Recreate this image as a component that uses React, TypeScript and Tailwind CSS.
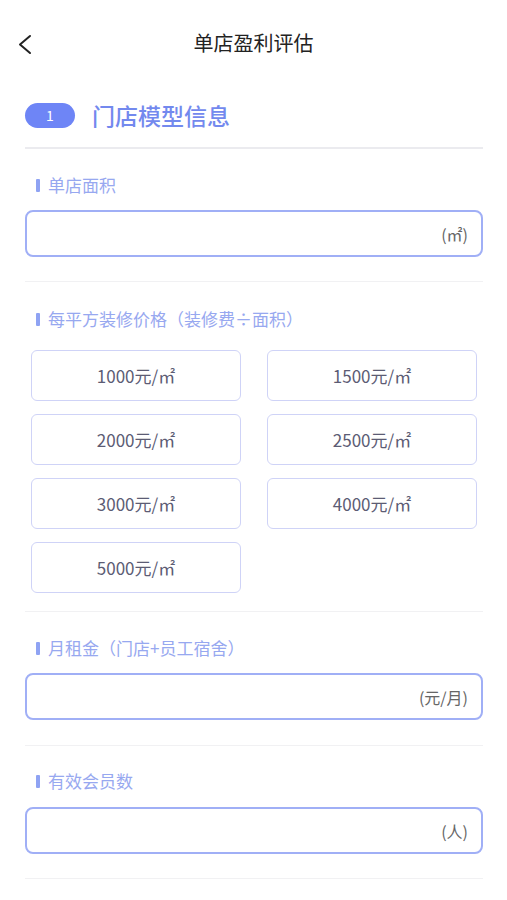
const prices = ["1000", "1500", "2000", "2500", "3000", "4000", "5000"]

function Label({ text }: { text: string }) {
  return (
    <div className="flex items-center h-[24px] pl-[11px] gap-[8px]">
      <span className="w-[4px] h-[13px] rounded-[1px] bg-[#8fa3f3]" />
      <span className="text-[17px] leading-[24px] text-[#97a8f0]">{text}</span>
    </div>
  )
}

function UnitInput({ unit }: { unit: string }) {
  return (
    <div className="h-[47px] rounded-[8px] border-[2px] border-[#a0aff6] flex items-center justify-end pr-[13px]">
      <span className="text-[16px] text-[#666]">{unit}</span>
    </div>
  )
}

function Divider() {
  return <div className="h-px bg-[#f1f1f3]" />
}

export default function App() {
  return (
    <div
      className="w-[507px] min-h-[900px] bg-white"
      style={{ fontFamily: '"Noto Sans CJK SC", "Noto Sans", sans-serif' }}
    >
      {/* header */}
      <div className="relative h-[86px] flex items-center justify-center">
        <svg
          className="absolute left-[17px] top-[34px]"
          width="16"
          height="21"
          viewBox="0 0 16 21"
          fill="none"
        >
          <polyline
            points="13,2 3,10.5 13,19"
            stroke="#222"
            strokeWidth="2"
            strokeLinecap="round"
            strokeLinejoin="round"
          />
        </svg>
        <h1 className="text-[20px] text-[#222]">单店盈利评估</h1>
      </div>

      <div className="pl-[25px] pr-[24px]">
        {/* section title */}
        <div className="mt-[16px] h-[26px] flex items-center gap-[17px]">
          <span className="w-[50px] h-[25px] rounded-full bg-[#6e85f6] text-white text-[14px] flex items-center justify-center">
            1
          </span>
          <span className="text-[23px] font-medium text-[#7389ee] leading-none">门店模型信息</span>
        </div>
        <div className="mt-[19px] h-[2px] bg-[#ebebef]" />

        <div className="mt-[24px]">
          <Label text="单店面积" />
        </div>
        <div className="mt-[13px]">
          <UnitInput unit="(㎡)" />
        </div>
        <div className="mt-[24px]">
          <Divider />
        </div>

        <div className="mt-[25px]">
          <Label text="每平方装修价格（装修费÷面积）" />
        </div>
        <div className="mt-[19px] px-[6px] grid grid-cols-2 gap-x-[26px] gap-y-[13px]">
          {prices.map((p) => (
            <div
              key={p}
              className="h-[51px] rounded-[6px] border border-[#cfd3f7] flex items-center justify-center text-[17px] text-[#5c5c74]"
            >
              {p}元/㎡
            </div>
          ))}
        </div>
        <div className="mt-[18px]">
          <Divider />
        </div>

        <div className="mt-[24px]">
          <Label text="月租金（门店+员工宿舍）" />
        </div>
        <div className="mt-[13px]">
          <UnitInput unit="(元/月)" />
        </div>
        <div className="mt-[25px]">
          <Divider />
        </div>

        <div className="mt-[23px]">
          <Label text="有效会员数" />
        </div>
        <div className="mt-[14px]">
          <UnitInput unit="(人)" />
        </div>
        <div className="mt-[24px]">
          <Divider />
        </div>
      </div>
    </div>
  )
}
